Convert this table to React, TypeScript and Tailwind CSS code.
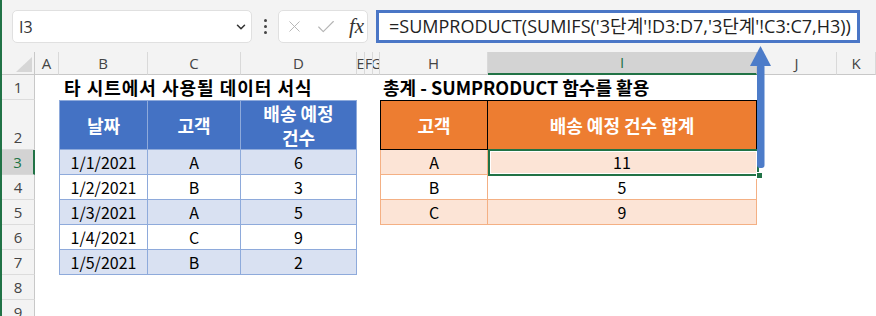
import { ChevronDown, X, Check } from "lucide-react";

const cols = ["A", "B", "C", "D", "E", "F", "G", "H", "I", "J", "K"];
const rows = [1, 2, 3, 4, 5, 6, 7, 8, 9];

const leftData = [
  ["1/1/2021", "A", "6"],
  ["1/2/2021", "B", "3"],
  ["1/3/2021", "A", "5"],
  ["1/4/2021", "C", "9"],
  ["1/5/2021", "B", "2"],
];

const rightData = [
  ["A", "11"],
  ["B", "5"],
  ["C", "9"],
];

const kr = "font-['Noto_Sans_CJK_KR','Noto_Sans',sans-serif]";
const ui = "font-['Open_Sans','Noto_Sans_CJK_KR',sans-serif]";

const FormulaBar = () => (
  <div className={`flex h-[52px] items-start bg-[#f3f3f3] pt-[10px] ${ui}`}>
    {/* name box */}
    <div className="ml-[10px] flex h-[33px] w-[240px] items-center justify-between rounded-[5px] border border-[#e0e0e0] bg-white pl-[6px] pr-[3px]">
      <span className="text-[16px] text-[#333]">I3</span>
      <ChevronDown size={14} strokeWidth={2.6} className="text-[#333]" />
    </div>
    {/* dots */}
    <div className="ml-[12px] mt-[9px] flex flex-col gap-[3px]">
      <span className="h-[3px] w-[3px] rounded-full bg-[#444]" />
      <span className="h-[3px] w-[3px] rounded-full bg-[#444]" />
      <span className="h-[3px] w-[3px] rounded-full bg-[#444]" />
    </div>
    {/* fx box */}
    <div className="ml-[11px] flex h-[33px] w-[90px] items-center rounded-[5px] border border-[#e0e0e0] bg-white pl-[6px]">
      <X size={19} strokeWidth={1.2} className="text-[#b4b4b4]" />
      <Check size={22} strokeWidth={1.2} className="ml-[11px] text-[#b4b4b4]" />
      <span className="ml-[12px] font-['Liberation_Serif',serif] text-[21px] italic leading-none text-[#333]">fx</span>
    </div>
    {/* formula */}
    <div className="ml-[8px] flex h-[33px] w-[484px] items-center border-[3px] border-[#4a76c6] bg-white pl-[10px]">
      <span className="whitespace-nowrap text-[18px] text-[#222]">
        =SUMPRODUCT(SUMIFS('3단계'!D3:D7,'3단계'!C3:C7,H3))
      </span>
    </div>
  </div>
);

export default function App() {
  return (
    <div className="relative h-[316px] w-[876px] overflow-hidden border-l-2 border-[#217346] bg-white">
      <FormulaBar />

      <div className="grid grid-cols-[33px_24px_89px_93px_116px_8px_8px_7px_108px_269px_80px_1fr] grid-rows-[23px_25px_50px_repeat(7,25px)]">
        {/* corner */}
        <div className="border-b border-r border-[#c8c8c8] bg-[#f3f3f3]">
          <svg width="32" height="22" viewBox="0 0 32 22" className="block">
            <path d="M14 20 L30 20 L30 5 Z" fill="#d6d6d6" />
          </svg>
        </div>

        {/* column headers */}
        {cols.map((c) => (
          <div
            key={c}
            className={`flex items-center justify-center overflow-hidden border-r ${ui} ${
              c === "I"
                ? "border-b-2 border-r-[#c8c8c8] border-b-[#217346] bg-[#d3d3d3] text-[#217346]"
                : "border-b border-r-[#d9d9d9] border-b-[#c8c8c8] bg-[#f3f3f3] text-[#444]"
            } ${c === "E" || c === "F" || c === "G" ? "text-[14px]" : "text-[15px]"}`}
          >
            {c}
          </div>
        ))}

        {/* row headers */}
        {rows.map((r) => (
          <div
            key={r}
            style={{ gridRowStart: r + 1, gridColumnStart: 1 }}
            className={`flex items-end justify-center border-b pb-[1px] ${ui} text-[15px] ${
              r === 3
                ? "border-r-2 border-b-[#d9d9d9] border-r-[#217346] bg-[#d3d3d3] text-[#217346]"
                : "border-r border-b-[#dcdcdc] border-r-[#c8c8c8] bg-[#f3f3f3] text-[#444]"
            }`}
          >
            {r}
          </div>
        ))}

        {/* titles */}
        <div className={`col-span-4 col-start-3 row-start-2 flex items-center whitespace-nowrap pl-[5px] text-[18px] font-bold tracking-[1px] text-black ${kr}`}>
          타 시트에서 사용될 데이터 서식
        </div>
        <div className={`col-span-3 col-start-9 row-start-2 flex items-center whitespace-nowrap pl-[3px] text-[18px] font-bold text-black ${kr}`}>
          총계 - SUMPRODUCT 함수를 활용
        </div>

        {/* left table */}
        <div className={`col-span-3 col-start-3 row-span-6 row-start-3 grid grid-cols-[89px_93px_116px] grid-rows-[50px_repeat(5,25px)] ${kr}`}>
          {["날짜", "고객"].map((h, i) => (
            <div
              key={h}
              className={`flex items-center justify-center border-b border-r border-t border-[#8eaadb] bg-[#4472c4] text-[18px] font-bold text-white ${i === 0 ? "border-l" : ""}`}
            >
              {h}
            </div>
          ))}
          <div className="flex flex-col items-center justify-center border-b border-r border-t border-[#8eaadb] bg-[#4472c4] text-[18px] font-bold leading-[24px] text-white">
            <span>배송 예정</span>
            <span>건수</span>
          </div>
          {leftData.map((row, ri) =>
            row.map((v, ci) => (
              <div
                key={`${ri}-${ci}`}
                className={`flex items-center justify-center border-b border-r border-[#8eaadb] text-[16px] text-black ${
                  ri % 2 === 0 ? "bg-[#d9e1f2]" : "bg-white"
                } ${ci === 0 ? "border-l" : ""}`}
              >
                {v}
              </div>
            ))
          )}
        </div>

        {/* right table */}
        <div className={`col-span-2 col-start-9 row-span-4 row-start-3 grid grid-cols-[108px_269px] grid-rows-[50px_repeat(3,25px)] ${kr}`}>
          <div className="flex items-center justify-center border border-black bg-[#ed7d31] text-[18px] font-bold text-white">
            고객
          </div>
          <div className="flex items-center justify-center border-b border-r border-t border-black bg-[#ed7d31] text-[18px] font-bold text-white">
            배송 예정 건수 합계
          </div>
          {rightData.map((row, ri) =>
            row.map((v, ci) => (
              <div
                key={`${ri}-${ci}`}
                className={`flex items-center justify-center border-b border-r border-[#f4b084] text-[16px] text-black ${
                  ri % 2 === 0 ? "bg-[#fce4d6]" : "bg-white"
                } ${ci === 0 ? "border-l" : ""}`}
              >
                {v}
              </div>
            ))
          )}
        </div>
      </div>

      {/* active cell I3 */}
      <div className="pointer-events-none absolute left-[486px] top-[149px] h-[27px] w-[271px] border-2 border-[#217346]">
        <div className="h-full w-full border border-white" />
      </div>
      <div className="absolute left-[754px] top-[172px] h-[7px] w-[7px] border border-white bg-[#217346]" />

      {/* blue arrow */}
      <svg className="absolute left-[746px] top-[44px]" width="26" height="128" viewBox="0 0 26 128">
        <path d="M12.5 2 L23 22 L2 22 Z" fill="#4d7cc9" />
        <rect x="9" y="20" width="7.5" height="104" rx="3" fill="#4d7cc9" />
      </svg>
    </div>
  );
}
